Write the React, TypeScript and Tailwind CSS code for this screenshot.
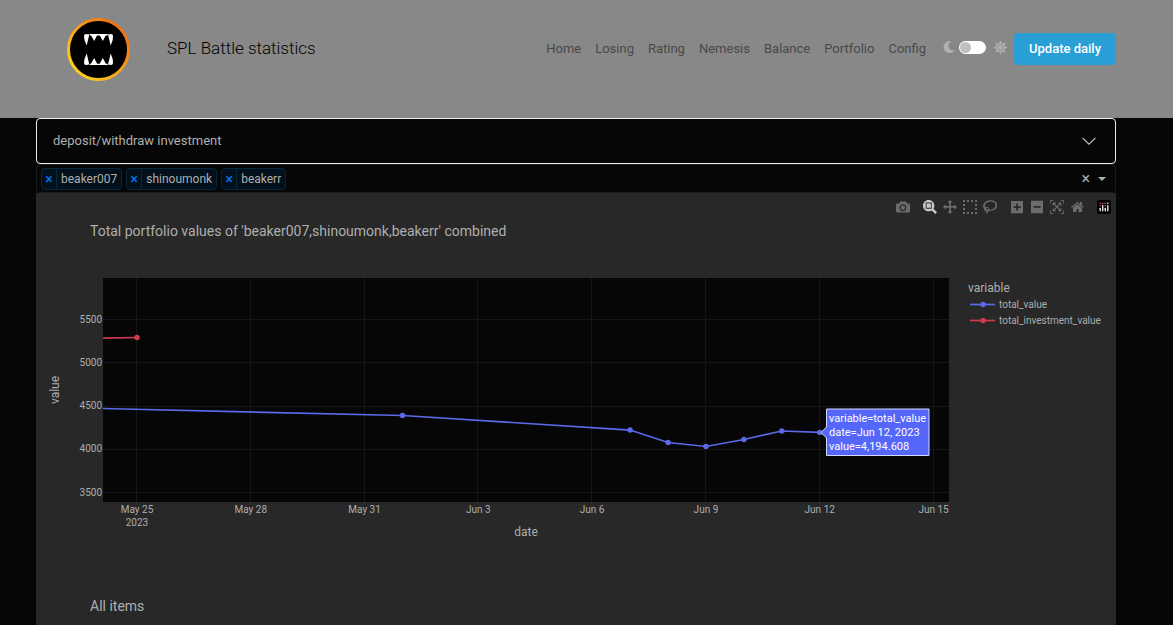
import { useState } from 'react';
import { FaMoon, FaSun } from 'react-icons/fa';

const NAV_LINKS = ['Home', 'Losing', 'Rating', 'Nemesis', 'Balance', 'Portfolio', 'Config'];

const ICONS = {
  camera: {
    width: 1000,
    path: 'm500 450c-83 0-150-67-150-150 0-83 67-150 150-150 83 0 150 67 150 150 0 83-67 150-150 150z m400 150h-120c-16 0-34 13-39 29l-31 93c-6 15-23 28-40 28h-340c-16 0-34-13-39-28l-31-94c-6-15-23-28-40-28h-120c-55 0-100-45-100-100v-450c0-55 45-100 100-100h800c55 0 100 45 100 100v450c0 55-45 100-100 100z m-400-550c-138 0-250 112-250 250 0 138 112 250 250 250 138 0 250-112 250-250 0-138-112-250-250-250z m365 380c-19 0-35 16-35 35 0 19 16 35 35 35 19 0 35-16 35-35 0-19-16-35-35-35z',
  },
  zoom: {
    width: 1000,
    path: 'm1000-25l-250 251c40 63 63 138 63 218 0 224-182 406-407 406-224 0-406-182-406-406s183-406 407-406c80 0 155 22 218 62l250-250 125 125z m-812 250l0 438 437 0 0-438-437 0z m62 375l313 0 0-312-313 0 0 312z',
  },
  pan: {
    width: 1000,
    path: 'm1000 350l-187 188 0-125-250 0 0 250 125 0-188 187-187-187 125 0 0-250-250 0 0 125-188-188 186-187 0 125 252 0 0-250-125 0 187-188 188 188-125 0 0 250 250 0 0-126 187 188z',
  },
  select: {
    width: 1000,
    path: 'm0 850l0-143 143 0 0 143-143 0z m286 0l0-143 143 0 0 143-143 0z m285 0l0-143 143 0 0 143-143 0z m286 0l0-143 143 0 0 143-143 0z m-857-286l0-143 143 0 0 143-143 0z m857 0l0-143 143 0 0 143-143 0z m-857-285l0-143 143 0 0 143-143 0z m857 0l0-143 143 0 0 143-143 0z m-857-286l0-143 143 0 0 143-143 0z m286 0l0-143 143 0 0 143-143 0z m285 0l0-143 143 0 0 143-143 0z m286 0l0-143 143 0 0 143-143 0z',
  },
  lasso: {
    width: 1031,
    path: 'm1018 538c-36 207-290 336-568 286-277-48-473-256-436-463 10-57 36-108 76-151-13-66 11-137 68-183 34-28 75-41 114-42l-55-70 0 0c-2-1-3-2-4-3-10-14-8-34 5-45 14-11 34-8 45 4 1 1 2 3 2 5l0 0 113 140c16 11 31 24 45 40 4 3 6 7 8 11 48-3 100 0 151 9 278 48 473 255 436 462z m-624-379c-80 14-149 48-197 96 42 42 109 47 156 9 33-26 47-66 41-105z m-187-74c-19 16-33 37-39 60 50-32 109-55 174-68-42-25-95-24-135 8z m360 75c-34-7-69-9-102-8 8 62-16 128-68 170-73 59-175 54-244-5-9 20-16 40-20 61-28 159 121 317 333 354s407-60 434-217c28-159-121-318-333-355z',
  },
  plus: {
    width: 875,
    path: 'm1 787l0-875 875 0 0 875-875 0z m687-500l-187 0 0-187-125 0 0 187-188 0 0 125 188 0 0 187 125 0 0-187 187 0 0-125z',
  },
  minus: {
    width: 875,
    path: 'm0 788l0-876 875 0 0 876-875 0z m688-500l-500 0 0 125 500 0 0-125z',
  },
  autoscale: {
    width: 1000,
    path: 'm250 850l-187 0-63 0 0-62 0-188 63 0 0 188 187 0 0 62z m688 0l-188 0 0-62 188 0 0-188 62 0 0 188 0 62-62 0z m-875-938l0 188-63 0 0-188 0-62 63 0 187 0 0 62-187 0z m875 188l0-188-188 0 0-62 188 0 62 0 0 62 0 188-62 0z m-125 188l-1 0-93-94-156 156 156 156 92-93 2 0 0 250-250 0 0-2 93-92-156-156-156 156 94 92 0 2-250 0 0-250 0 0 93 93 157-156-157-156-93 94 0 0 0-250 250 0 0 0-94 93 156 157 156-157-93-93 0 0 250 0 0 250z',
  },
  home: {
    width: 929,
    path: 'm786 296v-267q0-15-11-26t-25-10h-214v214h-143v-214h-214q-15 0-25 10t-11 26v267q0 1 0 2t0 2l321 264 321-264q1-1 1-4z m124 39l-34-41q-5-5-12-6h-2q-7 0-12 3l-386 322-386-322q-7-4-13-4-7 2-12 7l-35 41q-4 5-3 13t6 12l401 334q18 15 42 15t43-15l136-114v109q0 8 5 13t13 5h107q8 0 13-5t5-13v-227l122-102q5-5 6-12t-4-13z',
  },
};

type IconName = keyof typeof ICONS;

const MODEBAR_GROUPS: Array<Array<{ icon: IconName; title: string; active?: boolean }>> = [
  [{ icon: 'camera', title: 'Download plot as a png' }],
  [
    { icon: 'zoom', title: 'Zoom', active: true },
    { icon: 'pan', title: 'Pan' },
    { icon: 'select', title: 'Box Select' },
    { icon: 'lasso', title: 'Lasso Select' },
  ],
  [
    { icon: 'plus', title: 'Zoom in' },
    { icon: 'minus', title: 'Zoom out' },
    { icon: 'autoscale', title: 'Autoscale' },
    { icon: 'home', title: 'Reset axes' },
  ],
];

// day = days since May 25
const TOTAL_VALUE = [
  { day: 7, value: 4390 },
  { day: 13, value: 4222 },
  { day: 14, value: 4078 },
  { day: 15, value: 4032 },
  { day: 16, value: 4113 },
  { day: 17, value: 4211 },
  { day: 18, value: 4194.608 },
];

const X_TICKS = [
  { day: 0, label: 'May 25' },
  { day: 3, label: 'May 28' },
  { day: 6, label: 'May 31' },
  { day: 9, label: 'Jun 3' },
  { day: 12, label: 'Jun 6' },
  { day: 15, label: 'Jun 9' },
  { day: 18, label: 'Jun 12' },
  { day: 21, label: 'Jun 15' },
];

const Y_TICKS = [3500, 4000, 4500, 5000, 5500];

const PLOT = { left: 67, right: 913, top: 85, bottom: 309 };

const xPos = (day: number) => 101 + day * 37.93;
const yPos = (value: number) => 299.5 - (value - 3500) * 0.0865;

export default function App() {
  const [accounts, setAccounts] = useState(['beaker007', 'shinoumonk', 'beakerr']);

  return (
    <div className="flex min-h-screen flex-col bg-[#060606] font-['Roboto',sans-serif] text-[#adafae]">
      <Header />
      <main className="mr-[57px] ml-9 flex flex-1 flex-col">
        <button
          type="button"
          className="flex h-[46px] items-center justify-between rounded border border-[#eee] pr-[18px] pl-4 text-[13px]"
        >
          deposit/withdraw investment
          <svg className="h-2 w-4" viewBox="0 0 16 8" fill="none" stroke="#c4c4c4" strokeWidth="1.1">
            <path d="M1.5 .8 8 7.2 14.5 .8" />
          </svg>
        </button>
        <AccountSelect accounts={accounts} onChange={setAccounts} />
        <div className="flex-1 bg-[#282828]">
          <div className="relative">
            <PortfolioChart />
            <Modebar />
          </div>
          <h2 className="px-[54px] pt-7 text-sm">All items</h2>
        </div>
      </main>
    </div>
  );
}

function Header() {
  return (
    <header className="flex items-center bg-[#888] pt-[17px] pr-[57px] pb-[37px] pl-[66px]">
      <Logo />
      <h1 className="ml-[37px] text-[17px] font-light text-black">SPL Battle statistics</h1>
      <nav className="ml-auto flex gap-[14px] text-[13px] text-[#484848]">
        {NAV_LINKS.map(link => (
          <a key={link} href="#">{link}</a>
        ))}
      </nav>
      <label className="ml-[17px] flex items-center gap-1 pb-1 text-[#b0b0b0]">
        <FaMoon className="size-3" />
        <input
          type="checkbox"
          aria-label="Toggle theme"
          className="flex h-[13px] w-[27px] appearance-none items-center rounded-full bg-white px-px before:size-[11px] before:rounded-full before:bg-[#bfbfbf]"
        />
        <FaSun className="ml-1 size-[13px]" />
      </label>
      <button type="button" className="ml-[7px] h-8 rounded bg-[#2a9fd6] px-[15px] text-[13px] font-medium text-white">
        Update daily
      </button>
    </header>
  );
}

function Logo() {
  return (
    <svg className="size-16" viewBox="0 0 64 64" role="img" aria-label="Logo">
      <defs>
        <linearGradient id="ring" x1="0" y1="1" x2="1" y2="0">
          <stop offset="0.1" stopColor="#ffd21a" />
          <stop offset="0.5" stopColor="#f7a01d" />
          <stop offset="0.9" stopColor="#ee6c14" />
        </linearGradient>
      </defs>
      <circle cx="32.5" cy="32.5" r="30" fill="#000" stroke="url(#ring)" strokeWidth="3" />
      <g fill="#fff">
        <path d="M20 17Q18 17 18 19L18.500 23 20.700 28.500 23.300 17.500ZM24.300 17H31.700L28.200 24ZM33 17H40.500L36.800 24ZM42 17.500 44.700 28.500 46.700 23 47 19Q47 17 45 17Z" />
        <path d="M23.500 17H42L41.500 18.500H24Z" />
        <path d="M20 48Q18 48 18 46L18.500 42 20.700 36.500 23.300 47.500ZM24.300 48H31.700L28.200 41ZM33 48H40.500L36.800 41ZM42 47.500 44.700 36.500 46.700 42 47 46Q47 48 45 48Z" />
        <path d="M23.500 48H42L41.500 46.800H24Z" />
      </g>
    </svg>
  );
}

function AccountSelect({ accounts, onChange }: { accounts: string[]; onChange: (accounts: string[]) => void }) {
  return (
    <div className="flex h-[29px] items-center justify-between rounded border border-[#1c1c1c] pr-[9px] pl-1">
      <div className="flex gap-1">
        {accounts.map(account => (
          <span key={account} className="flex h-[22px] items-center rounded-sm border border-[#06283f] bg-[#02101b] text-xs">
            <button
              type="button"
              aria-label={`Remove ${account}`}
              onClick={() => onChange(accounts.filter(a => a !== account))}
              className="h-full w-[15px] border-r border-[#06283f] text-sm text-[#007eff]"
            >
              ×
            </button>
            <span className="px-1">{account}</span>
          </span>
        ))}
      </div>
      <div className="flex items-center gap-2">
        <button type="button" aria-label="Clear all" onClick={() => onChange([])} className="text-base leading-5">
          ×
        </button>
        <button type="button" aria-label="Open list">
          <svg className="h-1 w-2" viewBox="0 0 8 4" fill="#adafae">
            <path d="M0 0h8L4 4z" />
          </svg>
        </button>
      </div>
    </div>
  );
}

function Modebar() {
  return (
    <div className="absolute top-1 right-[2px] flex gap-[7px]">
      {MODEBAR_GROUPS.map((group, idx) => (
        <div key={idx} className="flex">
          {group.map(({ icon, title, active }) => (
            <button
              key={icon}
              type="button"
              title={title}
              className={`flex h-5 w-5 items-center justify-center ${active ? 'text-[#c9c9c9]' : 'text-[#6c6c6c]'}`}
            >
              <svg className="h-[14px]" viewBox={`0 0 ${ICONS[icon].width} 1000`} fill="currentColor">
                <path d={ICONS[icon].path} transform="matrix(1 0 0 -1 0 850)" />
              </svg>
            </button>
          ))}
        </div>
      ))}
      <a href="#" title="Produced with Plotly" className="flex h-5 w-5 items-center justify-center">
        <svg className="size-[14px]" viewBox="0 0 132 132">
          <rect width="132" height="132" rx="18" fill="#000" />
          <g fill="#e5556d">
            <circle cx="30" cy="30" r="7" />
            <circle cx="54" cy="30" r="7" />
            <circle cx="78" cy="30" r="7" />
            <circle cx="30" cy="54" r="7" />
            <circle cx="78" cy="54" r="7" />
          </g>
          <g fill="#fff">
            <circle cx="102" cy="30" r="7" />
            <rect x="24" y="72" width="12" height="36" rx="6" />
            <rect x="48" y="48" width="12" height="60" rx="6" />
            <rect x="72" y="72" width="12" height="36" rx="6" />
            <rect x="96" y="48" width="12" height="60" rx="6" />
          </g>
        </svg>
      </a>
    </div>
  );
}

function PortfolioChart() {
  const line = TOTAL_VALUE.map(p => `L${xPos(p.day)} ${yPos(p.value)}`).join('');

  return (
    <svg className="block w-full" viewBox="0 0 1080 375" fill="#adafae">
      <text x="54" y="43" fontSize="14">Total portfolio values of 'beaker007,shinoumonk,beakerr' combined</text>

      <rect x={PLOT.left} y={PLOT.top} width={PLOT.right - PLOT.left} height={PLOT.bottom - PLOT.top} fill="#060606" />

      {/* Grid and ticks */}
      {X_TICKS.map(({ day, label }) => (
        <g key={label}>
          <path d={`M${Math.round(xPos(day)) - 0.5} ${PLOT.top}V${PLOT.bottom}`} stroke="#161616" />
          <text x={xPos(day)} y="320" fontSize="10" textAnchor="middle">{label}</text>
        </g>
      ))}
      <text x={xPos(0)} y="333" fontSize="10" textAnchor="middle">2023</text>
      {Y_TICKS.map(value => (
        <g key={value}>
          <path d={`M${PLOT.left} ${Math.floor(yPos(value)) + 0.5}H${PLOT.right}`} stroke="#161616" />
          <text x="66" y={yPos(value) + 3} fontSize="10" textAnchor="end">{value}</text>
        </g>
      ))}

      {/* Axis titles */}
      <text x="490" y="343" fontSize="12" textAnchor="middle">date</text>
      <text transform="translate(23 197) rotate(-90)" fontSize="12" textAnchor="middle">value</text>

      {/* Traces */}
      <g fill="none" strokeWidth="1.7">
        <path d={`M${PLOT.left} ${yPos(4471)}${line}`} stroke="#5c68ea" />
        <path d={`M${PLOT.left} ${yPos(5284)}L${xPos(0)} ${yPos(5292)}`} stroke="#cf3b50" />
      </g>
      {TOTAL_VALUE.map(p => (
        <circle key={p.day} cx={xPos(p.day)} cy={yPos(p.value)} r="2.7" fill="#5c68ea" />
      ))}
      <circle cx={xPos(0)} cy={yPos(5292)} r="2.7" fill="#cf3b50" />

      {/* Legend */}
      <text x="932" y="99" fontSize="12">variable</text>
      <path d="M934 111.500h25" stroke="#5c68ea" strokeWidth="1.7" />
      <circle cx="947" cy="111.500" r="2.7" fill="#5c68ea" />
      <text x="963" y="115" fontSize="10">total_value</text>
      <path d="M934 127.500h25" stroke="#cf3b50" strokeWidth="1.7" />
      <circle cx="947" cy="127.500" r="2.7" fill="#cf3b50" />
      <text x="963" y="131" fontSize="10">total_investment_value</text>

      {/* Hover label */}
      <path d="M785 239.500 790.500 234V216H893V262.500H790.500V245Z" fill="#5566fb" stroke="#d5d9ff" />
      <g fill="#fff" fontSize="11">
        <text x="793" y="229">variable=total_value</text>
        <text x="793" y="243">date=Jun 12, 2023</text>
        <text x="793" y="257">value=4,194.608</text>
      </g>
    </svg>
  );
}
